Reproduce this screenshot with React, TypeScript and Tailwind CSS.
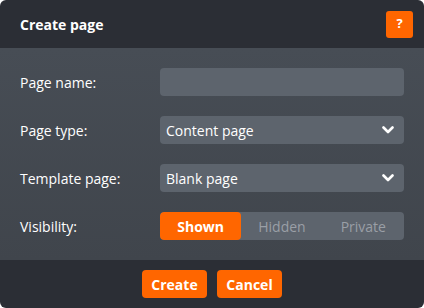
import { useState } from "react";

const Chevron = () => (
  <svg width="12" height="8" viewBox="0 0 12 8" className="absolute right-[10px] top-1/2 -translate-y-1/2 pointer-events-none">
    <path d="M1.5 1.5 L6 6 L10.5 1.5" fill="none" stroke="#ffffff" strokeWidth="2.6" strokeLinecap="round" strokeLinejoin="round" />
  </svg>
);

const Row = ({ label, children }: { label: string; children: React.ReactNode }) => (
  <div className="flex items-center h-[28px]">
    <div className="w-[140px] text-[14px] text-white">{label}</div>
    <div className="w-[244px] h-[28px]">{children}</div>
  </div>
);

export default function App() {
  const [visibility, setVisibility] = useState("Shown");
  const options = ["Shown", "Hidden", "Private"];

  return (
    <div className="w-[424px] h-[308px] bg-white" style={{ fontFamily: '"Open Sans", sans-serif' }}>
      <div className="w-[424px] h-[308px] rounded-[6px] overflow-hidden flex flex-col">
        <div className="h-[48px] bg-[#2b2e35] flex items-center justify-between pl-[20px] pr-[11px]">
          <span className="text-[14px] font-bold text-white">Create page</span>
          <button className="w-[27px] h-[27px] rounded-[3px] bg-[#ff6600] text-white text-[13px] font-bold flex items-center justify-center">?</button>
        </div>
        <div className="flex-1 bg-gradient-to-b from-[#474d55] to-[#40454c] px-[20px] py-[20px] flex flex-col gap-[20px]">
          <Row label="Page name:">
            <input className="w-full h-full rounded-[4px] bg-[#5d646d] outline-none px-[6px] text-[14px] text-white" />
          </Row>
          <Row label="Page type:">
            <div className="relative w-full h-full rounded-[4px] bg-[#5d646d] flex items-center px-[6px] text-[14px] text-white">
              Content page
              <Chevron />
            </div>
          </Row>
          <Row label="Template page:">
            <div className="relative w-full h-full rounded-[4px] bg-[#5d646d] flex items-center px-[6px] text-[14px] text-white">
              Blank page
              <Chevron />
            </div>
          </Row>
          <Row label="Visibility:">
            <div className="w-full h-full rounded-[4px] bg-[#5d646d] flex overflow-hidden">
              {options.map((o) => (
                <button
                  key={o}
                  onClick={() => setVisibility(o)}
                  className={
                    o === visibility
                      ? "flex-1 bg-[#ff6600] text-white font-bold text-[14px] rounded-[4px]"
                      : "flex-1 text-[#9a9fa6] text-[14px]"
                  }
                >
                  {o}
                </button>
              ))}
            </div>
          </Row>
        </div>
        <div className="h-[48px] bg-[#2b2e35] flex items-center justify-center gap-[10px]">
          <button className="w-[65px] h-[28px] rounded-[4px] bg-[#ff6600] text-white text-[14px] font-bold">Create</button>
          <button className="w-[65px] h-[28px] rounded-[4px] bg-[#ff6600] text-white text-[14px] font-bold">Cancel</button>
        </div>
      </div>
    </div>
  );
}
